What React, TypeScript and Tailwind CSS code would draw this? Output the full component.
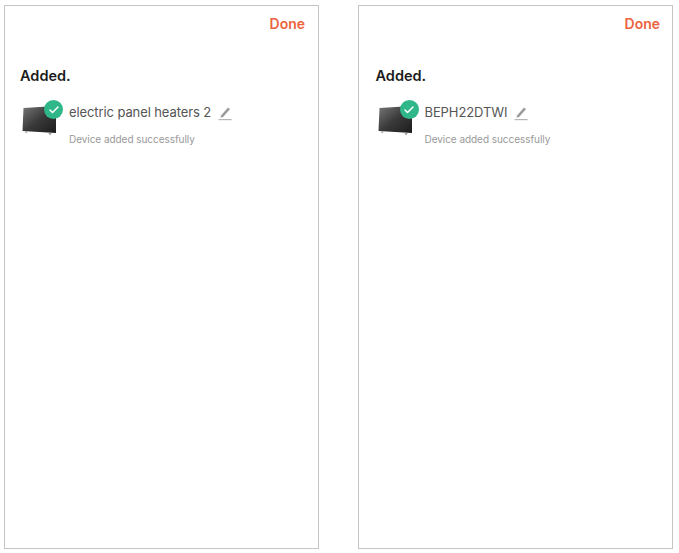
import { Check } from "lucide-react";

function TvIcon() {
  return (
    <svg width="36" height="32" viewBox="0 0 36 32" className="blur-[0.4px]">
      <defs>
        <linearGradient id="screen" x1="0" y1="0" x2="1" y2="1">
          <stop offset="0" stopColor="#787878" />
          <stop offset="0.5" stopColor="#3a3a3a" />
          <stop offset="1" stopColor="#1c1c1c" />
        </linearGradient>
      </defs>
      <path d="M1.5 3 L34 1 L34 28 L0.5 26 Z" fill="url(#screen)" />
      <path d="M3 26.2 L6 26.4 L4 28.5 Z" fill="#a5a5a5" />
      <path d="M26 27.8 L30 28 L28 30.5 Z" fill="#a5a5a5" />
    </svg>
  );
}

function PencilIcon() {
  return (
    <svg width="14" height="15" viewBox="0 0 14 15" className="blur-[0.3px]">
      <path d="M3 9.5 L10 1.5 L12 3.2 L5 11 L2.6 11.8 Z" fill="#9b9b9b" />
      <rect x="0.5" y="13" width="13" height="1.2" fill="#b5b5b5" />
    </svg>
  );
}

function AddedPanel({ name, className }: { name: string; className: string }) {
  return (
    <div className={`w-[315px] h-[544px] shrink-0 bg-white border border-[#c4c4c4] pt-[9px] ${className}`}>
      <div className="flex justify-end">
        <span className="text-[14px] leading-[18px] font-semibold text-[#ec6240]">Done</span>
      </div>
      <h2 className="mt-[33px] text-[14.5px] leading-[20px] font-semibold text-[#1c1c1c]">Added.</h2>
      <div className="mt-[13px] flex">
        <div className="relative w-[49px] h-[48px] shrink-0">
          <div className="absolute left-[2px] top-[6px]">
            <TvIcon />
          </div>
          <div className="absolute left-[24px] top-[1px] w-[19px] h-[19px] rounded-full bg-[#2fb689] flex items-center justify-center">
            <Check size={12} strokeWidth={3} className="text-white" />
          </div>
        </div>
        <div className="flex flex-col">
          <div className="flex items-center h-[20px] mt-[3px]">
            <span className="text-[13px] leading-[20px] tracking-[-0.1px] text-[#555555]">{name}</span>
            <span className="ml-[7px] mt-[2px] flex">
              <PencilIcon />
            </span>
          </div>
          <p className="mt-[10px] text-[10px] leading-[14px] tracking-[-0.05px] text-[#999999]">Device added successfully</p>
        </div>
      </div>
    </div>
  );
}

export default function App() {
  return (
    <div className="w-[679px] h-[553px] bg-white pt-[5px] pl-[4px] flex gap-[39px] overflow-hidden font-['Inter',sans-serif]">
      <AddedPanel name="electric panel heaters 2" className="pl-[15px] pr-[13px]" />
      <AddedPanel name="BEPH22DTWI" className="pl-[16.5px] pr-[12px]" />
    </div>
  );
}
